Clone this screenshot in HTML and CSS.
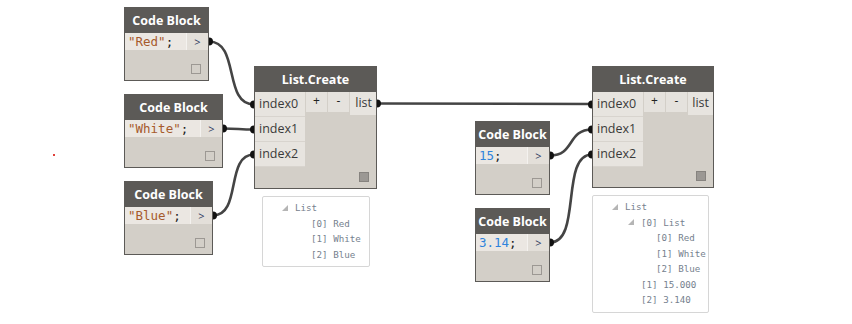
FILE: index.html
```html
<!DOCTYPE html>
<html lang="en">
<head>
    <meta charset="UTF-8">
    <meta name="viewport" content="width=device-width, initial-scale=1.0">
    <title>List.Create graph</title>
    <link rel="stylesheet" href="styles.css">
</head>
<body>
    <div class="canvas">
        <span class="stray-dot"></span>

        <!-- wires and port dots -->
        <svg class="wires" width="852" height="324" viewBox="0 0 852 324">
            <g class="wire">
                <path d="M209,41.5 C240,41.5 223,104.5 254,104.5"/>
                <path d="M223,128.5 C238,128.5 239,129.5 254,129.5"/>
                <path d="M213,215.5 C242,215.5 225,154.5 254,154.5"/>
                <path d="M377,103.5 L592,104"/>
                <path d="M550,155.5 C575,155.5 567,129.5 592,129.5"/>
                <path d="M550,242.5 C582,242.5 560,154.5 592,154.5"/>
            </g>
            <g class="port-dot">
                <path d="M209,37.5 a4,4 0 0 1 0,8 z"/>
                <path d="M223,124.5 a4,4 0 0 1 0,8 z"/>
                <path d="M213,211.5 a4,4 0 0 1 0,8 z"/>
                <path d="M550,151.5 a4,4 0 0 1 0,8 z"/>
                <path d="M550,238.5 a4,4 0 0 1 0,8 z"/>
                <path d="M377,99.5 a4,4 0 0 1 0,8 z"/>
                <path d="M254,100.5 a4,4 0 0 0 0,8 z"/>
                <path d="M254,125.5 a4,4 0 0 0 0,8 z"/>
                <path d="M254,150.5 a4,4 0 0 0 0,8 z"/>
                <path d="M592,100.5 a4,4 0 0 0 0,8 z"/>
                <path d="M592,125.5 a4,4 0 0 0 0,8 z"/>
                <path d="M592,150.5 a4,4 0 0 0 0,8 z"/>
            </g>
        </svg>

        <!-- code blocks -->
        <div class="node code n-red">
            <div class="node-title">Code Block</div>
            <div class="code-row">
                <div class="code-field"><span class="str">"Red"</span>;</div>
                <div class="code-run">&gt;</div>
            </div>
            <div class="node-foot"><span class="preview-box"></span></div>
        </div>

        <div class="node code n-white">
            <div class="node-title">Code Block</div>
            <div class="code-row">
                <div class="code-field"><span class="str">"White"</span>;</div>
                <div class="code-run">&gt;</div>
            </div>
            <div class="node-foot"><span class="preview-box"></span></div>
        </div>

        <div class="node code n-blue">
            <div class="node-title">Code Block</div>
            <div class="code-row">
                <div class="code-field"><span class="str">"Blue"</span>;</div>
                <div class="code-run">&gt;</div>
            </div>
            <div class="node-foot"><span class="preview-box"></span></div>
        </div>

        <div class="node code n-15">
            <div class="node-title">Code Block</div>
            <div class="code-row">
                <div class="code-field"><span class="num">15</span>;</div>
                <div class="code-run">&gt;</div>
            </div>
            <div class="node-foot"><span class="preview-box"></span></div>
        </div>

        <div class="node code n-314">
            <div class="node-title">Code Block</div>
            <div class="code-row">
                <div class="code-field"><span class="num">3.14</span>;</div>
                <div class="code-run">&gt;</div>
            </div>
            <div class="node-foot"><span class="preview-box"></span></div>
        </div>

        <!-- List.Create nodes -->
        <div class="node lc lc-first">
            <div class="node-title">List.Create</div>
            <div class="lc-body">
                <div class="lc-inputs">
                    <div class="port">index0</div>
                    <div class="port">index1</div>
                    <div class="port">index2</div>
                </div>
                <div class="lc-right">
                    <div class="lc-top">
                        <div class="lc-btn">+</div>
                        <div class="lc-btn">-</div>
                        <div class="lc-out">list</div>
                    </div>
                    <span class="preview-box filled"></span>
                </div>
            </div>
        </div>

        <div class="node lc lc-second">
            <div class="node-title">List.Create</div>
            <div class="lc-body">
                <div class="lc-inputs">
                    <div class="port">index0</div>
                    <div class="port">index1</div>
                    <div class="port">index2</div>
                </div>
                <div class="lc-right">
                    <div class="lc-top">
                        <div class="lc-btn">+</div>
                        <div class="lc-btn">-</div>
                        <div class="lc-out">list</div>
                    </div>
                    <span class="preview-box filled"></span>
                </div>
            </div>
        </div>

        <!-- preview bubbles -->
        <div class="watch w-first">
            <div class="tree-row lvl0"><span class="tw"><i class="tri"></i></span>List</div>
            <div class="tree-row lvl1"><span class="tw"></span>[0] Red</div>
            <div class="tree-row lvl1"><span class="tw"></span>[1] White</div>
            <div class="tree-row lvl1"><span class="tw"></span>[2] Blue</div>
        </div>

        <div class="watch w-second">
            <div class="tree-row lvl0"><span class="tw"><i class="tri"></i></span>List</div>
            <div class="tree-row lvl1"><span class="tw"><i class="tri"></i></span>[0] List</div>
            <div class="tree-row lvl2"><span class="tw"></span>[0] Red</div>
            <div class="tree-row lvl2"><span class="tw"></span>[1] White</div>
            <div class="tree-row lvl2"><span class="tw"></span>[2] Blue</div>
            <div class="tree-row lvl1"><span class="tw"></span>[1] 15.000</div>
            <div class="tree-row lvl1"><span class="tw"></span>[2] 3.140</div>
        </div>
    </div>
</body>
</html>
```

FILE: styles.css
```css
* {
    margin: 0;
    padding: 0;
    box-sizing: border-box;
}

body {
    background: #fff;
    font-family: 'Open Sans', 'Noto Sans', sans-serif;
}

.canvas {
    position: relative;
    width: 852px;
    height: 324px;
    overflow: hidden;
    background: #fff;
}

.stray-dot {
    position: absolute;
    left: 53px;
    top: 154px;
    width: 2px;
    height: 2px;
    background: #e0403a;
}

.wires {
    position: absolute;
    left: 0;
    top: 0;
    z-index: 2;
    pointer-events: none;
}

.wire path {
    fill: none;
    stroke: #444;
    stroke-width: 2.6;
}

.port-dot path {
    fill: #111;
}

/* nodes */
.node {
    position: absolute;
    display: flex;
    flex-direction: column;
    border: 1px solid #5c5a57;
    border-top: none;
    background: #d3cfc8;
}

.node-title {
    height: 26px;
    background: #5c5a57;
    color: #fff;
    font-weight: 700;
    font-size: 12.5px;
    display: flex;
    align-items: center;
    justify-content: center;
}

.code {
    height: 74px;
}

.n-red   { left: 124px; top: 7px;   width: 85px; }
.n-white { left: 124px; top: 94px;  width: 99px; }
.n-blue  { left: 124px; top: 181px; width: 89px; }
.n-15    { left: 475px; top: 121px; width: 75px; }
.n-314   { left: 475px; top: 208px; width: 75px; }

.code-row {
    display: flex;
    height: 17px;
}

.code-field {
    flex: 1;
    background: #ebe7e2;
    padding-left: 3px;
    font-family: 'DejaVu Sans Mono', 'Liberation Mono', monospace;
    font-size: 12.5px;
    line-height: 17px;
    color: #222;
    white-space: nowrap;
    overflow: hidden;
}

.code-field .str {
    color: #a65a2c;
}

.code-field .num {
    color: #2f83dc;
}

.code-run {
    width: 22px;
    background: #e3dfd9;
    border-left: 1px solid #f4f2ef;
    color: #2b3a60;
    font-size: 11px;
    line-height: 17px;
    text-align: center;
}

.node-foot {
    flex: 1;
    display: flex;
    justify-content: flex-end;
    align-items: flex-end;
    padding: 0 7px 6px 0;
}

.preview-box {
    display: block;
    width: 10px;
    height: 10px;
    border: 1px solid #9c9893;
}

.preview-box.filled {
    background: #9b9894;
    border-color: #86837f;
    align-self: flex-end;
    margin: auto 7px 6px 0;
}

/* List.Create */
.lc {
    top: 66px;
    height: 123px;
}

.lc-first  { left: 254px; width: 123px; }
.lc-second { left: 592px; width: 122px; height: 122px; }

.lc-body {
    flex: 1;
    display: flex;
}

.lc-inputs {
    width: 50px;
    display: flex;
    flex-direction: column;
    align-self: flex-start;
}

.port {
    height: 25px;
    padding-left: 4px;
    background: #e7e4df;
    border-bottom: 1px solid #d8d4ce;
    color: #3a3a3a;
    font-size: 12.5px;
    line-height: 24px;
}

.lc-right {
    flex: 1;
    display: flex;
    flex-direction: column;
}

.lc-top {
    display: flex;
    gap: 1px;
    padding-left: 1px;
}

.lc-btn {
    width: 21px;
    height: 20px;
    background: #e5e2dd;
    color: #222;
    font-size: 12px;
    line-height: 18px;
    text-align: center;
}

.lc-out {
    flex: 1;
    height: 23px;
    background: #e7e4df;
    color: #3a3a3a;
    font-size: 12.5px;
    line-height: 22px;
    text-align: right;
    padding-right: 4px;
}

/* watch bubbles */
.watch {
    position: absolute;
    background: #fff;
    border: 1px solid #d6d6d6;
    border-radius: 2px;
    padding: 3px 0 4px;
    font-family: 'DejaVu Sans Mono', 'Liberation Mono', monospace;
    font-size: 9.2px;
    color: #76818e;
}

.w-first  { left: 262px; top: 196px; width: 108px; }
.w-second { left: 592px; top: 195px; width: 117px; }

.tree-row {
    display: flex;
    align-items: center;
    height: 15.5px;
    white-space: nowrap;
}

.lvl0 { padding-left: 19px; }
.lvl1 { padding-left: 35px; }
.lvl2 { padding-left: 50px; }

.tw {
    width: 13px;
    height: 15px;
    display: flex;
    align-items: center;
}

.tri {
    display: block;
    width: 0;
    height: 0;
    border-left: 6px solid transparent;
    border-bottom: 6px solid #b5b5b5;
}
```
